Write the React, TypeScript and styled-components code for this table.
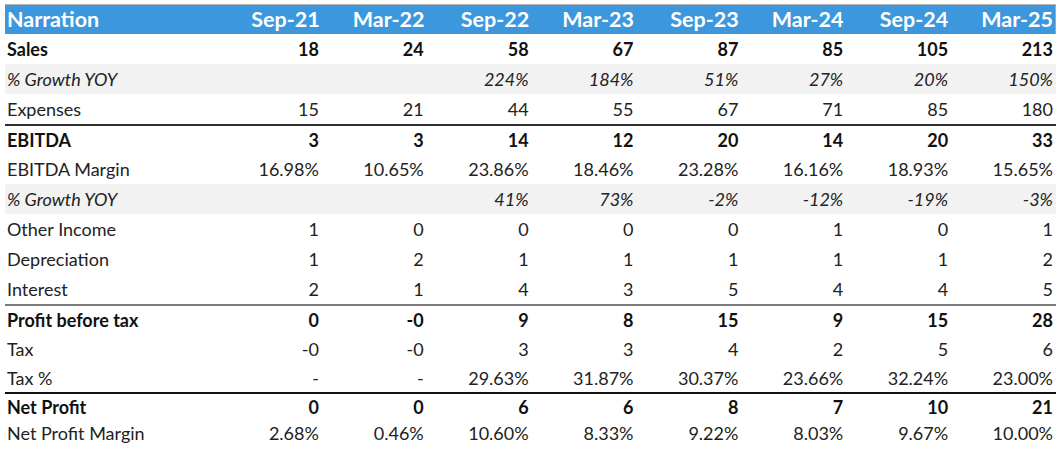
import React from 'react';
import styled, { createGlobalStyle, css } from 'styled-components';

const GlobalStyle = createGlobalStyle`
  html, body {
    margin: 0;
    padding: 0;
    background: #ffffff;
  }
  body {
    font-family: Lato, 'Liberation Sans', sans-serif;
    color: #1c1c1c;
  }
`;

type RowKind = 'bold' | 'italic' | 'plain';

interface Row {
  label: string;
  kind: RowKind;
  values: string[];
  shaded?: boolean;
  rule?: 'dark' | 'grey' | 'black';
  height?: number;
}

const periods = ['Sep-21', 'Mar-22', 'Sep-22', 'Mar-23', 'Sep-23', 'Mar-24', 'Sep-24', 'Mar-25'];

const rows: Row[] = [
  { label: 'Sales', kind: 'bold', values: ['18', '24', '58', '67', '87', '85', '105', '213'] },
  { label: '% Growth YOY', kind: 'italic', shaded: true, values: ['', '', '224%', '184%', '51%', '27%', '20%', '150%'] },
  { label: 'Expenses', kind: 'plain', values: ['15', '21', '44', '55', '67', '71', '85', '180'] },
  { label: 'EBITDA', kind: 'bold', rule: 'dark', values: ['3', '3', '14', '12', '20', '14', '20', '33'] },
  { label: 'EBITDA Margin', kind: 'plain', values: ['16.98%', '10.65%', '23.86%', '18.46%', '23.28%', '16.16%', '18.93%', '15.65%'] },
  { label: '% Growth YOY', kind: 'italic', shaded: true, values: ['', '', '41%', '73%', '-2%', '-12%', '-19%', '-3%'] },
  { label: 'Other Income', kind: 'plain', values: ['1', '0', '0', '0', '0', '1', '0', '1'] },
  { label: 'Depreciation', kind: 'plain', values: ['1', '2', '1', '1', '1', '1', '1', '2'] },
  { label: 'Interest', kind: 'plain', values: ['2', '1', '4', '3', '5', '4', '4', '5'] },
  { label: 'Profit before tax', kind: 'bold', rule: 'grey', values: ['0', '-0', '9', '8', '15', '9', '15', '28'] },
  { label: 'Tax', kind: 'plain', values: ['-0', '-0', '3', '3', '4', '2', '5', '6'] },
  { label: 'Tax %', kind: 'plain', height: 28, values: ['-', '-', '29.63%', '31.87%', '30.37%', '23.66%', '32.24%', '23.00%'] },
  { label: 'Net Profit', kind: 'bold', rule: 'black', height: 27, values: ['0', '0', '6', '6', '8', '7', '10', '21'] },
  { label: 'Net Profit Margin', kind: 'plain', height: 28, values: ['2.68%', '0.46%', '10.60%', '8.33%', '9.22%', '8.03%', '9.67%', '10.00%'] },
];

const ruleColors = {
  dark: '#2e2e2e',
  grey: '#7a7a7a',
  black: '#111111',
};

const Page = styled.div`
  padding: 4px 5px 0 5px;
  width: 1051px;
`;

const Table = styled.div`
  display: flex;
  flex-direction: column;
`;

const columns = css`
  display: grid;
  grid-template-columns: 212px repeat(8, 1fr);
  align-items: center;
`;

const HeaderRow = styled.div`
  ${columns};
  height: 29px;
  background: #3d97dc;
  border-top: 1px solid #b4b4b4;
  border-right: 1px solid #a8a8a8;
  color: #ffffff;
  font-weight: 700;
  font-size: 21.5px;
`;

const HeaderCell = styled.div<{ $left?: boolean }>`
  text-align: ${(p) => (p.$left ? 'left' : 'right')};
  padding: ${(p) => (p.$left ? '0 0 0 2px' : '0 2px 0 0')};
  white-space: nowrap;
  line-height: 29px;
`;

const DataRow = styled.div<{ $shaded?: boolean; $rule?: keyof typeof ruleColors; $h: number; $kind: RowKind }>`
  ${columns};
  box-sizing: border-box;
  height: ${(p) => p.$h}px;
  background: ${(p) => (p.$shaded ? '#f2f2f2' : 'transparent')};
  border-top: ${(p) => (p.$rule ? `2px solid ${ruleColors[p.$rule]}` : 'none')};
  font-size: 18px;
  font-weight: ${(p) => (p.$kind === 'bold' ? 700 : 400)};
  font-style: ${(p) => (p.$kind === 'italic' ? 'italic' : 'normal')};
  color: ${(p) => (p.$kind === 'bold' ? '#111111' : '#222222')};
`;

const Label = styled.div`
  padding-left: 2px;
  white-space: nowrap;
`;

const Value = styled.div`
  text-align: right;
  padding-right: 3px;
  white-space: nowrap;
`;

export default function App() {
  return (
    <>
      <GlobalStyle />
      <Page>
        <Table>
          <HeaderRow>
            <HeaderCell $left>Narration</HeaderCell>
            {periods.map((p) => (
              <HeaderCell key={p}>{p}</HeaderCell>
            ))}
          </HeaderRow>
          {rows.map((r, i) => (
            <DataRow
              key={i}
              $shaded={r.shaded}
              $rule={r.rule}
              $h={r.height ?? 30}
              $kind={r.kind}
            >
              <Label>{r.label}</Label>
              {r.values.map((v, j) => (
                <Value key={j}>{v}</Value>
              ))}
            </DataRow>
          ))}
        </Table>
      </Page>
    </>
  );
}
